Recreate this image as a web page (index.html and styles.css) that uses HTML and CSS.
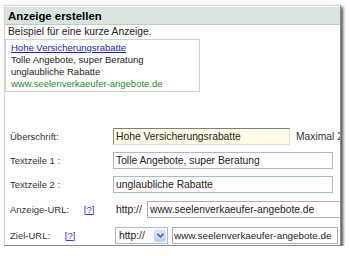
FILE: index.html
```html
<!DOCTYPE html>
<html lang="de">
<head>
    <meta charset="UTF-8">
    <title>Anzeige erstellen</title>
    <link rel="stylesheet" href="styles.css">
</head>
<body>

<div class="panel">
    <div class="panel-head">Anzeige erstellen</div>

    <div class="hint">Beispiel für eine kurze Anzeige.</div>

    <!-- Vorschau der Anzeige -->
    <div class="preview">
        <a href="#" class="ad-title">Hohe Versicherungsrabatte</a>
        <div>Tolle Angebote, super Beratung</div>
        <div>unglaubliche Rabatte</div>
        <div class="ad-url">www.seelenverkaeufer-angebote.de</div>
    </div>

    <!-- Formular -->
    <div class="form">
        <div class="row">
            <label class="label" for="title">Überschrift:</label>
            <div class="field">
                <input type="text" id="title" class="input input-title" value="Hohe Versicherungsrabatte">
                <span class="limit">Maximal 25 Zeichen</span>
            </div>
        </div>

        <div class="row">
            <label class="label" for="line1">Textzeile 1 :</label>
            <div class="field">
                <input type="text" id="line1" class="input input-line" value="Tolle Angebote, super Beratung">
            </div>
        </div>

        <div class="row">
            <label class="label" for="line2">Textzeile 2 :</label>
            <div class="field">
                <input type="text" id="line2" class="input input-line" value="unglaubliche Rabatte">
            </div>
        </div>

        <div class="row row-url">
            <label class="label" for="dispUrl">Anzeige-URL: <a href="#" class="help">[?]</a></label>
            <div class="field">
                <span class="prefix">http://</span>
                <input type="text" id="dispUrl" class="input input-disp" value="www.seelenverkaeufer-angebote.de">
            </div>
        </div>

        <div class="row row-url">
            <label class="label" for="destUrl">Ziel-URL: <a href="#" class="help">[?]</a></label>
            <div class="field">
                <div class="select">
                    <span class="select-text">http://</span>
                    <span class="select-btn">
                        <svg width="7" height="5" viewBox="0 0 7 5"><path d="M0.5 0.8 L3.5 3.8 L6.5 0.8" fill="none" stroke="#4d6185" stroke-width="1.6"/></svg>
                    </span>
                </div>
                <input type="text" id="destUrl" class="input input-dest" value="www.seelenverkaeufer-angebote.de">
            </div>
        </div>
    </div>
</div>

</body>
</html>
```

FILE: styles.css
```css
body {
    margin: 0;
    background: #fff;
    font-family: 'Liberation Sans', Arial, sans-serif;
    color: #222;
}

.panel {
    box-sizing: border-box;
    margin: 5px 0 0 4px;
    width: 337px;
    height: 241px;
    padding-top: 1px;
    border: 1px solid #d3d7d4;
    border-right-color: #888;
    border-bottom-color: #888;
    background: #fff;
    box-shadow: 2px 2px 3px rgba(0, 0, 0, 0.7);
    overflow: hidden;
}

.panel-head {
    height: 17px;
    line-height: 18px;
    padding-left: 3px;
    background: #d9e4dd;
    border-bottom: 1px solid #bfcac3;
    font-size: 11.4px;
    font-weight: bold;
    color: #000;
}

.hint {
    margin-top: 1px;
    height: 12px;
    line-height: 12px;
    padding-left: 3px;
    font-size: 10.3px;
    color: #222;
}

.preview {
    box-sizing: border-box;
    width: 195px;
    margin-top: 1px;
    padding: 2px 0 1px 5px;
    border: 1px solid #c9d2d8;
    font-size: 9.5px;
    line-height: 12px;
    color: #222;
}

.ad-title {
    color: #2424b4;
}

.ad-url {
    color: #2a8a2a;
}

.form {
    margin-top: 32px;
    padding-left: 5px;
}

.row {
    display: flex;
    align-items: center;
    height: 24px;
}

.row-url {
    height: 26px;
}

.label {
    flex: 0 0 103px;
    font-size: 9.5px;
    color: #333;
    white-space: nowrap;
}

.help {
    margin-left: 12px;
    color: #3333cc;
}

.field {
    display: flex;
    align-items: center;
    white-space: nowrap;
    font-size: 10.3px;
}

.input {
    box-sizing: border-box;
    height: 17px;
    margin: 0;
    padding: 0 2px;
    border: 1px solid #a9bacb;
    background: #fff;
    font-family: 'Liberation Sans', Arial, sans-serif;
    font-size: 10.3px;
    color: #222;
    outline: none;
    flex-shrink: 0;
}

.input-title {
    width: 177px;
    background: #fffbe6;
    border-color: #7d7d7d #e4e2d4 #e4e2d4 #8d8d8d;
}

.limit {
    margin-left: 6px;
    color: #333;
}

.input-line {
    width: 220px;
}

.prefix {
    margin-left: 3px;
    width: 31px;
}

.input-disp {
    width: 230px;
    border-color: #a8aeb3;
}

.select {
    box-sizing: border-box;
    display: flex;
    align-items: center;
    justify-content: space-between;
    width: 53px;
    height: 17px;
    margin-left: 2px;
    padding: 1px 1px 1px 3px;
    border: 1px solid #a9bacb;
    flex-shrink: 0;
}

.select-btn {
    display: flex;
    align-items: center;
    justify-content: center;
    width: 12px;
    height: 13px;
    background: linear-gradient(#dde7fb, #bcd0f5);
    border-radius: 2px;
}

.input-dest {
    width: 166px;
    margin-left: 4px;
    padding: 0 1px;
    font-size: 9.9px;
    border-color: #a8aeb3;
}
```
